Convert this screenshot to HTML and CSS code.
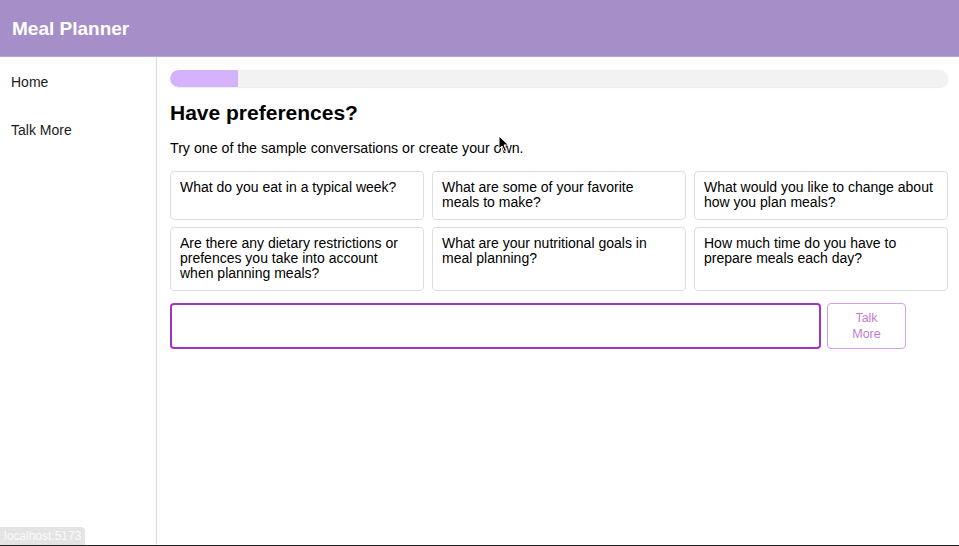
FILE: index.html
```html
<!DOCTYPE html>
<html lang="en">
<head>
    <meta charset="UTF-8">
    <meta name="viewport" content="width=device-width, initial-scale=1.0">
    <title>Meal Planner</title>
    <link rel="stylesheet" href="styles.css">
</head>
<body>
    <div class="app">
        <div class="header">Meal Planner</div>

        <div class="layout">
            <div class="sidebar">
                <a class="nav-link" href="#">Home</a>
                <a class="nav-link" href="#">Talk More</a>
            </div>

            <div class="main">
                <div class="progress">
                    <div class="progress-fill" style="width: 68px;"></div>
                </div>

                <h2>Have preferences?</h2>
                <p class="intro">Try one of the sample conversations or create your own.</p>

                <div class="samples">
                    <div class="sample">What do you eat in a typical week?</div>
                    <div class="sample">What are some of your favorite meals to make?</div>
                    <div class="sample">What would you like to change about how you plan meals?</div>
                    <div class="sample">Are there any dietary restrictions or prefences you take into account when planning meals?</div>
                    <div class="sample">What are your nutritional goals in meal planning?</div>
                    <div class="sample">How much time do you have to prepare meals each day?</div>
                </div>

                <div class="chat-form">
                    <input type="text" class="chat-input">
                    <button class="talk-button">Talk More</button>
                </div>
            </div>
        </div>
    </div>

    <!-- browser chrome bits in the screenshot -->
    <svg class="cursor" width="12" height="18" viewBox="0 0 12 18">
        <path d="M1 1 L1 14 L4 11 L6.5 16.5 L8.5 15.5 L6 10 L10.5 10 Z" fill="#000" stroke="#fff" stroke-width="1"/>
    </svg>
    <div class="status-bar">localhost:5173</div>
    <div class="window-edge"></div>
</body>
</html>
```

FILE: styles.css
```css
body {
    margin: 0;
    padding: 0;
    font-family: "Liberation Sans", Arial, sans-serif;
    color: #000;
    background-color: white;
}
.app {
    height: 100vh;
    display: flex;
    flex-direction: column;
}
.header {
    height: 57px;
    flex-shrink: 0;
    box-sizing: border-box;
    background-color: #a68fc9;
    color: white;
    font-size: 19px;
    font-weight: bold;
    padding: 18px 12px 0;
    border-bottom: 1px solid #b9a8d6;
}
.layout {
    flex: 1;
    display: flex;
}
.sidebar {
    width: 156px;
    border-right: 1px solid #dcdcdc;
    display: flex;
    flex-direction: column;
    padding-top: 17px;
}
.nav-link {
    color: #1a1a1a;
    text-decoration: none;
    font-size: 14px;
    padding: 0 11px;
    height: 48px;
}
.main {
    flex: 1;
    padding: 13px 11px 0 13px;
}
.progress {
    height: 17px;
    border-radius: 9px;
    background-color: #f2f2f2;
    box-shadow: 0 1px 1px rgba(0, 0, 0, 0.08);
    overflow: hidden;
}
.progress-fill {
    height: 100%;
    background-color: #d4b3fc;
    border-radius: 9px 0 0 9px;
}
h2 {
    font-size: 21px;
    line-height: 24px;
    margin: 14px 0 15px;
}
.intro {
    font-size: 14.2px;
    line-height: 17px;
    margin: 0 0 14px;
}
.samples {
    display: grid;
    grid-template-columns: repeat(3, 1fr);
    column-gap: 8px;
    row-gap: 7px;
}
.sample {
    border: 1px solid #dedede;
    border-radius: 4px;
    padding: 8px 12px 9px 9px;
    font-size: 14px;
    line-height: 15px;
    cursor: pointer;
}
.chat-form {
    display: grid;
    grid-template-columns: 1fr 79px;
    column-gap: 6px;
    margin: 12px 42px 0 0;
}
.chat-input {
    height: 46px;
    box-sizing: border-box;
    border: 2px solid #a433c2;
    border-radius: 4px;
    outline: none;
    font-family: inherit;
    font-size: 14px;
    padding: 0 10px;
}
.talk-button {
    height: 46px;
    background-color: white;
    border: 1px solid #d59ee6;
    border-radius: 4px;
    color: #c27bd6;
    font-family: inherit;
    font-size: 12.5px;
    line-height: 16px;
    padding: 0 18px;
    cursor: pointer;
}
.cursor {
    position: fixed;
    left: 498px;
    top: 135px;
}
.status-bar {
    position: fixed;
    left: 0;
    bottom: 1px;
    height: 18px;
    line-height: 18px;
    padding: 0 4px;
    background-color: #e4e4e4;
    color: #fafafa;
    font-size: 12px;
    border-top-right-radius: 4px;
}
.window-edge {
    position: fixed;
    left: 0;
    right: 0;
    bottom: 0;
    height: 1px;
    background-color: #222;
}
```
